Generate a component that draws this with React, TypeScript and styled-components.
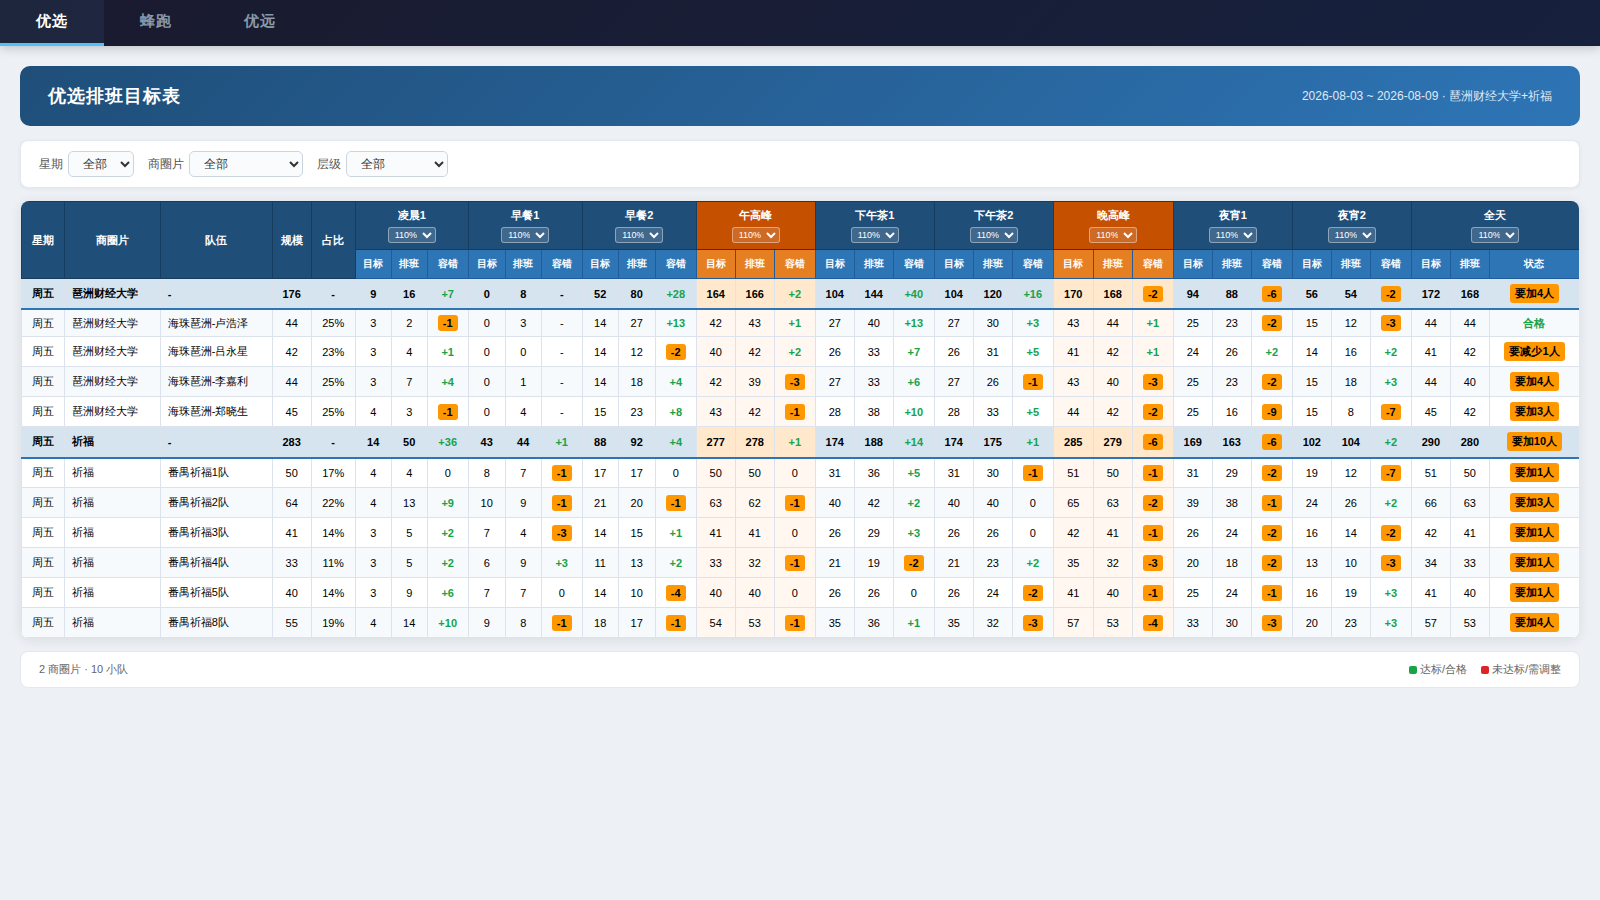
import React from "react";
import styled, { createGlobalStyle, css } from "styled-components";

const GlobalStyle = createGlobalStyle`
  * { box-sizing: border-box; margin: 0; padding: 0; }
  body {
    background: #edf0f5;
    color: #000;
    font-family: "Liberation Sans", sans-serif;
    font-size: 12px;
  }
`;

const Nav = styled.nav`
  display: flex;
  height: 46px;
  background: linear-gradient(135deg, #1a1a2e, #16213e);
  box-shadow: 0 2px 10px rgba(0, 0, 0, 0.2);
`;

const Tab = styled.button<{ $active?: boolean }>`
  width: 104px;
  border: 0;
  border-bottom: 3px solid ${(p) => (p.$active ? "#4fc3f7" : "transparent")};
  background: ${(p) => (p.$active ? "rgba(79, 195, 247, 0.08)" : "transparent")};
  color: ${(p) => (p.$active ? "#fff" : "#8899aa")};
  font: bold 15px "Liberation Sans", sans-serif;
  letter-spacing: 1px;
`;

const Page = styled.main`
  padding: 20px;
`;

const Banner = styled.header`
  display: flex;
  align-items: center;
  justify-content: space-between;
  height: 60px;
  padding: 0 28px;
  margin-bottom: 14px;
  border-radius: 10px;
  background: linear-gradient(135deg, #1f4e79, #2e75b6);
  color: #fff;
`;

const Title = styled.h1`
  font-size: 18px;
  letter-spacing: 1px;
`;

const Subtitle = styled.span`
  font-size: 12px;
  opacity: 0.85;
`;

const Panel = styled.section`
  display: flex;
  align-items: center;
  background: #fff;
  border: 1px solid #e2e8f0;
  border-radius: 8px;
  padding: 0 18px;
`;

const FilterBar = styled(Panel)`
  gap: 14px;
  height: 48px;
  margin-bottom: 12px;
  box-shadow: 0 1px 4px rgba(0, 0, 0, 0.05);
`;

const Field = styled.label`
  display: flex;
  align-items: center;
  gap: 5px;
  color: #555;
`;

const FilterSelect = styled.select<{ $width: number }>`
  width: ${(p) => p.$width}px;
  height: 26px;
  padding: 0 10px;
  border: 1px solid #cbd5e0;
  border-radius: 5px;
  background: #fafbfd;
  color: #333;
  font-family: inherit;
  font-size: 12px;
`;

const TableCard = styled.section`
  border: 1px solid transparent;
  border-radius: 9px;
  overflow: hidden;
  margin-bottom: 12px;
  background: #fff padding-box;
  box-shadow: 0 2px 12px rgba(0, 0, 0, 0.08);
`;

const Table = styled.table`
  width: 1558px;
  table-layout: fixed;
  border-collapse: collapse;
  font-size: 11px;
  text-align: center;
`;

const Col = styled.col<{ $width: number }>`
  width: ${(p) => p.$width}px;
`;

const HeadCell = styled.th<{ $peak?: boolean }>`
  height: 48px;
  border: 1px solid #163d5f;
  background: ${(p) => (p.$peak ? "#c55000" : "#1f4e79")};
  color: #fff;
`;

const HeadLabel = styled.div`
  line-height: 13px;
  margin-bottom: 5px;
`;

const RateSelect = styled.select`
  display: inline-block;
  vertical-align: top;
  width: 48px;
  height: 16px;
  padding: 0 2px;
  border: 1px solid rgba(255, 255, 255, 0.4);
  border-radius: 3px;
  background: rgba(255, 255, 255, 0.15);
  color: #fff;
  font-family: inherit;
  font-size: 9px;
`;

const SubCell = styled.th<{ $peak?: boolean }>`
  height: 29px;
  border: 1px solid #1f5c99;
  background: ${(p) => (p.$peak ? "#e67e22" : "#2e75b6")};
  color: #fff;
  font-size: 10px;
`;

const Row = styled.tr<{ $total: boolean; $height: number }>`
  height: ${(p) => p.$height}px;
  background: #fff;
  &:nth-child(even) { background: #f7fafd; }
  ${(p) => p.$total && css`
    && { background: #d6e4f0; }
    font-weight: bold;
    td { border-bottom: 2px solid #2e75b6; }
  `}
`;

const Cell = styled.td<{ $left?: boolean; $bg?: string }>`
  border: 1px solid #dce3ec;
  text-align: ${(p) => (p.$left ? "left" : "center")};
  padding: 0 ${(p) => (p.$left ? 7 : 0)}px;
  white-space: nowrap;
  ${(p) => p.$bg && css`background: ${p.$bg};`}
`;

const Good = styled.span`
  color: #16a34a;
  font-weight: bold;
`;

const Warn = styled.span`
  display: inline-block;
  padding: 2px 5px;
  border-radius: 3px;
  background: #ff9800;
  color: #000;
  font-weight: bold;
`;

const FooterBar = styled(Panel)`
  justify-content: space-between;
  height: 37px;
  font-size: 11px;
  color: #666;
`;

const Legend = styled.div`
  display: flex;
  gap: 14px;
`;

const LegendItem = styled.span`
  display: flex;
  align-items: center;
  gap: 3px;
`;

const Swatch = styled.i<{ $color: string }>`
  width: 8px;
  height: 8px;
  border-radius: 2px;
  background: ${(p) => p.$color};
`;

const COLS = [42.7, 96, 112, 39, 44, 36, 36, 41, 37, 36, 41, 36, 37, 41, 39, 39, 41, 39, 39, 41, 39, 39, 41, 40, 39, 41, 39, 39, 41, 39, 39, 41, 39, 39, 90.3];
const PERIODS = ["凌晨1", "早餐1", "早餐2", "午高峰", "下午茶1", "下午茶2", "晚高峰", "夜宵1", "夜宵2", "全天"];
const isPeak = (i: number) => i === 3 || i === 6;

const A = "琶洲财经大学";
const B = "祈福";
// area | team | size | share | values for each period | status
const DATA = [
  `${A}|-|176|-|9 16 +7 0 8 - 52 80 +28 164 166 +2 104 144 +40 104 120 +16 170 168 -2 94 88 -6 56 54 -2 172 168|要加4人`,
  `${A}|海珠琶洲-卢浩泽|44|25%|3 2 -1 0 3 - 14 27 +13 42 43 +1 27 40 +13 27 30 +3 43 44 +1 25 23 -2 15 12 -3 44 44|合格`,
  `${A}|海珠琶洲-吕永星|42|23%|3 4 +1 0 0 - 14 12 -2 40 42 +2 26 33 +7 26 31 +5 41 42 +1 24 26 +2 14 16 +2 41 42|要减少1人`,
  `${A}|海珠琶洲-李嘉利|44|25%|3 7 +4 0 1 - 14 18 +4 42 39 -3 27 33 +6 27 26 -1 43 40 -3 25 23 -2 15 18 +3 44 40|要加4人`,
  `${A}|海珠琶洲-郑晓生|45|25%|4 3 -1 0 4 - 15 23 +8 43 42 -1 28 38 +10 28 33 +5 44 42 -2 25 16 -9 15 8 -7 45 42|要加3人`,
  `${B}|-|283|-|14 50 +36 43 44 +1 88 92 +4 277 278 +1 174 188 +14 174 175 +1 285 279 -6 169 163 -6 102 104 +2 290 280|要加10人`,
  `${B}|番禺祈福1队|50|17%|4 4 0 8 7 -1 17 17 0 50 50 0 31 36 +5 31 30 -1 51 50 -1 31 29 -2 19 12 -7 51 50|要加1人`,
  `${B}|番禺祈福2队|64|22%|4 13 +9 10 9 -1 21 20 -1 63 62 -1 40 42 +2 40 40 0 65 63 -2 39 38 -1 24 26 +2 66 63|要加3人`,
  `${B}|番禺祈福3队|41|14%|3 5 +2 7 4 -3 14 15 +1 41 41 0 26 29 +3 26 26 0 42 41 -1 26 24 -2 16 14 -2 42 41|要加1人`,
  `${B}|番禺祈福4队|33|11%|3 5 +2 6 9 +3 11 13 +2 33 32 -1 21 19 -2 21 23 +2 35 32 -3 20 18 -2 13 10 -3 34 33|要加1人`,
  `${B}|番禺祈福5队|40|14%|3 9 +6 7 7 0 14 10 -4 40 40 0 26 26 0 26 24 -2 41 40 -1 25 24 -1 16 19 +3 41 40|要加1人`,
  `${B}|番禺祈福8队|55|19%|4 14 +10 9 8 -1 18 17 -1 54 53 -1 35 36 +1 35 32 -3 57 53 -4 33 30 -3 20 23 +3 57 53|要加4人`,
].map((line) => {
  const [area, team, size, share, values, status] = line.split("|");
  return { area, team, size, share, values: values.split(" "), status };
});
const HEIGHTS = [30.5, 27.5, 30, 30, 30, 31, 30, 30, 30, 30, 30, 30];

const Value = ({ text }: { text: string }) => {
  if (/^\+/.test(text)) return <Good>{text}</Good>;
  if (/^-\d/.test(text)) return <Warn>{text}</Warn>;
  return <>{text}</>;
};

export default function App() {
  return (
    <>
      <GlobalStyle />
      <Nav>
        <Tab $active>优选</Tab>
        <Tab>蜂跑</Tab>
        <Tab>优远</Tab>
      </Nav>
      <Page>
        <Banner>
          <Title>优选排班目标表</Title>
          <Subtitle>2026-08-03 ~ 2026-08-09 · 琶洲财经大学+祈福</Subtitle>
        </Banner>
        <FilterBar>
          <Field>星期<FilterSelect $width={66}><option>全部</option></FilterSelect></Field>
          <Field>商圈片<FilterSelect $width={114}><option>全部</option></FilterSelect></Field>
          <Field>层级<FilterSelect $width={102}><option>全部</option></FilterSelect></Field>
        </FilterBar>
        <TableCard>
          <Table>
            <colgroup>{COLS.map((w, i) => <Col key={i} $width={w} />)}</colgroup>
            <thead>
              <tr>
                {["星期", "商圈片", "队伍", "规模", "占比"].map((h) => <HeadCell key={h} rowSpan={2}>{h}</HeadCell>)}
                {PERIODS.map((p, i) => (
                  <HeadCell key={p} colSpan={3} $peak={isPeak(i)}>
                    <HeadLabel>{p}</HeadLabel>
                    <RateSelect><option>110%</option></RateSelect>
                  </HeadCell>
                ))}
              </tr>
              <tr>
                {PERIODS.flatMap((p, i) =>
                  ["目标", "排班", i === 9 ? "状态" : "容错"].map((s) => <SubCell key={p + s} $peak={isPeak(i)}>{s}</SubCell>)
                )}
              </tr>
            </thead>
            <tbody>
              {DATA.map((r, n) => {
                const total = r.team === "-";
                return (
                  <Row key={n} $total={total} $height={HEIGHTS[n]}>
                    <Cell>周五</Cell>
                    <Cell $left>{r.area}</Cell>
                    <Cell $left>{r.team}</Cell>
                    <Cell>{r.size}</Cell>
                    <Cell>{r.share}</Cell>
                    {r.values.map((v, i) => (
                      <Cell key={i} $bg={isPeak(Math.floor(i / 3)) ? (total ? "#ffe8cc" : "#fff7f0") : undefined}>
                        <Value text={v} />
                      </Cell>
                    ))}
                    <Cell>{r.status === "合格" ? <Good>{r.status}</Good> : <Warn>{r.status}</Warn>}</Cell>
                  </Row>
                );
              })}
            </tbody>
          </Table>
        </TableCard>
        <FooterBar>
          <span>2 商圈片 · 10 小队</span>
          <Legend>
            <LegendItem><Swatch $color="#16a34a" />达标/合格</LegendItem>
            <LegendItem><Swatch $color="#dc2626" />未达标/需调整</LegendItem>
          </Legend>
        </FooterBar>
      </Page>
    </>
  );
}
